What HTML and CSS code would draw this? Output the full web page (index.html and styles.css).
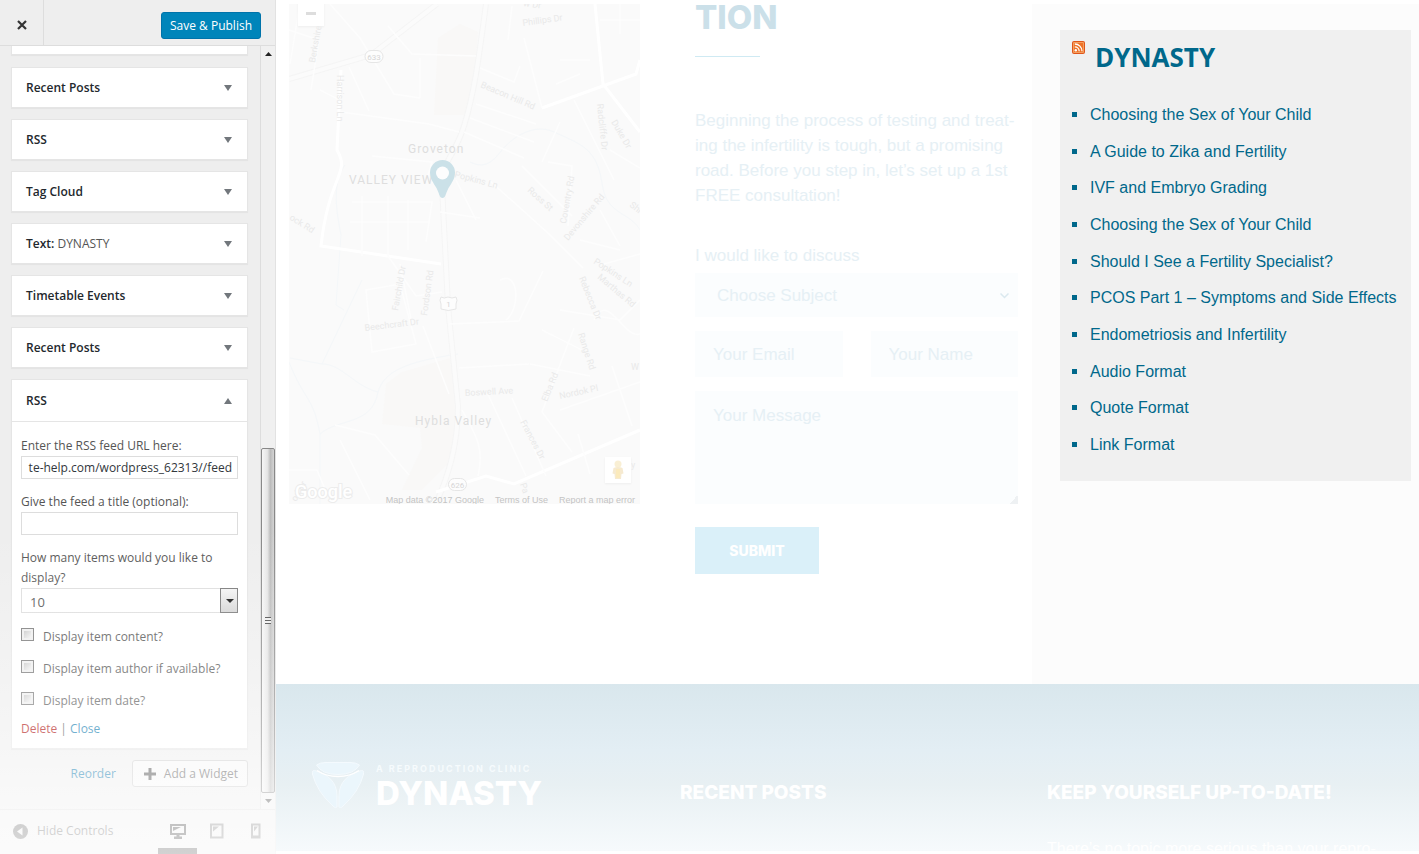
FILE: index.html
```html
<!DOCTYPE html>
<html lang="en">
<head>
<meta charset="utf-8">
<title>Customize: Dynasty</title>
<link rel="stylesheet" href="styles.css">
</head>
<body>
<div class="customizer">
  <aside class="sidebar">
    <header class="sidebar-head">
      <button class="close" type="button" aria-label="Close">
        <svg width="12" height="12" viewBox="0 0 12 12"><path d="M2 2l8 8M10 2l-8 8" stroke="#333" stroke-width="2.2" fill="none"/></svg>
      </button>
      <button class="publish" type="button">Save &amp; Publish</button>
    </header>
    <div class="sidebar-body">
      <div class="widgets">
        <div class="card-tail"></div>
        <div class="card"><button class="card-head" type="button"><span>Recent Posts</span><i class="caret"></i></button></div>
        <div class="card"><button class="card-head" type="button"><span>RSS</span><i class="caret"></i></button></div>
        <div class="card"><button class="card-head" type="button"><span>Tag Cloud</span><i class="caret"></i></button></div>
        <div class="card"><button class="card-head" type="button"><span>Text: <span class="sub">DYNASTY</span></span><i class="caret"></i></button></div>
        <div class="card"><button class="card-head" type="button"><span>Timetable Events</span><i class="caret"></i></button></div>
        <div class="card"><button class="card-head" type="button"><span>Recent Posts</span><i class="caret"></i></button></div>
        <div class="card">
          <button class="card-head open" type="button"><span>RSS</span><i class="caret up"></i></button>
          <form class="card-body">
            <div class="field">
              <label for="url">Enter the RSS feed URL here:</label>
              <input class="text url" id="url" type="text" value="te-help.com/wordpress_62313//feed">
            </div>
            <div class="field">
              <label for="title">Give the feed a title (optional):</label>
              <input class="text" id="title" type="text">
            </div>
            <div class="field">
              <label for="items">How many items would you like to display?</label>
              <div class="select"><select id="items"><option>10</option></select></div>
            </div>
            <div class="checks">
              <div class="check"><input type="checkbox" id="c1"><label for="c1">Display item content?</label></div>
              <div class="check"><input type="checkbox" id="c2"><label for="c2">Display item author if available?</label></div>
              <div class="check"><input type="checkbox" id="c3"><label for="c3">Display item date?</label></div>
            </div>
            <p class="links"><a class="delete" href="#">Delete</a> | <a href="#">Close</a></p>
          </form>
        </div>
        <div class="actions">
          <a href="#">Reorder</a>
          <button class="add" type="button">
            <svg width="12" height="12" viewBox="0 0 12 12"><path d="M6 0v12M0 6h12" stroke="#444" stroke-width="3"/></svg>
            <span>Add a Widget</span>
          </button>
        </div>
      </div>
      <div class="scrollbar">
        <svg width="7" height="4" viewBox="0 0 7 4"><path d="M0 4L3.500 0L7 4z" fill="#222"/></svg>
        <div class="thumb"><i></i></div>
        <svg width="7" height="4" viewBox="0 0 7 4"><path d="M0 0h7L3.500 4z" fill="#444"/></svg>
      </div>
    </div>
    <footer class="sidebar-foot">
      <button class="hide" type="button">
        <svg width="15" height="15" viewBox="0 0 15 15"><circle cx="7.500" cy="7.500" r="7.500" fill="#555"/><path d="M9.500 3.500v8L4 7.500z" fill="#eee"/></svg>
        <span>Hide Controls</span>
      </button>
      <div class="devices">
        <button class="device active" type="button" aria-label="Desktop">
          <svg width="16" height="16" viewBox="0 0 16 16"><path d="M1 2h14v9H1z" fill="#eee" stroke="#222" stroke-width="2"/><path d="M3 4h8L3 8z" fill="#222"/><path d="M6.500 11h3v2.500h-3zM4 13.500h8V16H4z" fill="#222"/></svg>
        </button>
        <button class="device" type="button" aria-label="Tablet">
          <svg width="14" height="16" viewBox="0 0 14 16"><path d="M1 1.500h11.500v13H1z" fill="none" stroke="#777" stroke-width="2"/><path d="M3 3.500h6l-6 5z" fill="#777"/></svg>
        </button>
        <button class="device" type="button" aria-label="Mobile">
          <svg width="10" height="16" viewBox="0 0 10 16"><path d="M1 1.500h7.500v13H1z" fill="none" stroke="#777" stroke-width="2"/><path d="M1 12.500h8V15H1zM3 3.500h4l-4 5z" fill="#777"/></svg>
        </button>
      </div>
    </footer>
  </aside>

  <main class="preview">
    <div class="columns">
      <section class="map">
        <svg class="map-art" viewBox="289 4 351 500" preserveAspectRatio="xMidYMid slice" role="img" aria-label="Map of Groveton">
          <rect x="200" y="0" width="500" height="520" fill="#fafafa"/>
          <path d="M438 38l22-14 18 8-4 56-3 27h-37z" fill="#f9f8f7"/>
          <path d="M386 384l16-12 48-14 8 60-4 40-32 32h-20l20-42-2-20-38-4z" fill="#f9f8f7"/>
          <g fill="none" stroke="#f4f7f9" stroke-width="1">
            <path d="M470 162c16 8 24-2 32-12s30-28 52-18 34 14 42 30 4 30 14 42 22 12 30 26"/>
            <path d="M345 165c-12 16-10 40-4 70l-5 70 8 5M362 280l-40 84-32-6M322 364c20 0 32 22 56 28 6-20 26-30 80-38M378 392c-6 34-40 26-58 42M289 362c16 40 24 34 31 72v70"/>
          </g>
          <g fill="none" stroke="#f5f5f5" stroke-width="6">
            <path d="M486 4c-8 60-12 90-22 122s-22 34-22 60l6 120 10 100c0 40-10 70-22 98"/>
            <path d="M289 79l82-24 66-51"/>
          </g>
          <g fill="none" stroke="#fbfbfb" stroke-width="4">
            <path d="M486 4c-8 60-12 90-22 122s-22 34-22 60l6 120 10 100c0 40-10 70-22 98"/>
            <path d="M289 79l82-24 66-51"/>
          </g>
          <g fill="none" stroke="#fff" stroke-width="3">
            <path d="M341 70l-4 80c14 24-8 24-16 96l120 18M595 4l8 80 37 48M542 108l94-34 4-14M436 492l50-16 28 8 126-54"/>
          </g>
          <g fill="none" stroke="#fdfdfd" stroke-width="1.500">
            <path d="M341 112l88 12 30 8M330 4l30 34 34 56 26 4M349 67l20 44M388 26l24 28 64 2M420 98v-40M524 38l18 70M508 40l4-34M480 68l34 14 6-16M476 104l60 20M470 118l64 24M464 132l60 26M489 180l60 54 34 34M522 166l50 50M548 162l24 4-4 60M560 122l-18 40M610 150l30 18M574 100l40 80M600 20h40M620 4v30"/>
            <path d="M423 326l26 68M449 324l70-3 24-50M560 310l60 10 20-20M574 328l-32 84 30 40M486 390l40 86M512 398l34 78M542 330l40 20M530 364l60 12M594 320c14-30 30 20 46 14M612 366l20 60M560 410l80-28M462 410c16 28 22 40 16 66M366 290l34-6 16 60-44 8zM388 256l28 40 26-4M400 264l12 60M459 368l70-4M590 474l-12-40M335 425l40 10 34 40M289 470h28l10 24M340 440l30 60M352 202h80l-6 40M350 222h80M362 196v60M388 196v60M408 200v50M372 156l60 6-6 20"/>
            <path d="M440 212l40 6M456 180l20 40M289 30l30 10-8 50M300 4l-10 60M320 90l20 10M560 60h30M556 84l24-10M600 210l20 36M580 240l40 10M604 264l36-10M500 280c20-10 20 30 6 40"/>
          </g>
          <g class="road-labels">
            <text transform="translate(315 63) rotate(-80)">Berkshire</text>
            <text transform="translate(337 75) rotate(90)">Harrison Ln</text>
            <text transform="translate(480 87) rotate(23)">Beacon Hill Rd</text>
            <text transform="translate(523 26) rotate(-8)">Phillips Dr</text>
            <text transform="translate(523 6) rotate(8)">w Dr</text>
            <text transform="translate(597 104) rotate(84)">Radcliffe Dr</text>
            <text transform="translate(611 122) rotate(60)">Duke Dr</text>
            <text transform="translate(454 177) rotate(15)">Popkins Ln</text>
            <text transform="translate(527 191) rotate(42)">Ross St</text>
            <text transform="translate(566 224) rotate(-80)">Coventry Rd</text>
            <text transform="translate(568 241) rotate(-50)">Devonshire Rd</text>
            <text transform="translate(629 206) rotate(38)">Shi</text>
            <text transform="translate(289 219) rotate(32)">ock Rd</text>
            <text transform="translate(398 311) rotate(-80)">Fairchild Dr</text>
            <text transform="translate(427 316) rotate(-82)">Fordson Rd</text>
            <text transform="translate(365 331) rotate(-7)">Beechcraft Dr</text>
            <text transform="translate(593 263) rotate(33)">Popkins Ln</text>
            <text transform="translate(597 278) rotate(40)">Marthas Rd</text>
            <text transform="translate(579 278) rotate(68)">Rebecca Dr</text>
            <text transform="translate(578 334) rotate(72)">Range Rd</text>
            <text transform="translate(465 396) rotate(-3)">Boswell Ave</text>
            <text transform="translate(547 402) rotate(-68)">Elba Rd</text>
            <text transform="translate(560 399) rotate(-12)">Nordok Pl</text>
            <text transform="translate(520 422) rotate(62)">Frances Dr</text>
            <text transform="translate(296 502) rotate(-60)">od Dr</text>
            <text transform="translate(520 484) rotate(72)">Pa</text>
            <text x="631" y="370">W</text>
            <text x="631" y="468">y</text>
          </g>
          <g class="place-labels">
            <text x="408" y="153">Groveton</text>
            <text x="349" y="184">VALLEY VIEW</text>
            <text x="415" y="425">Hybla Valley</text>
          </g>
          <g fill="#fdfdfd" stroke="#e6e6e6">
            <rect x="365" y="50.500" width="18" height="12" rx="6"/>
            <rect x="448.500" y="478.500" width="18" height="12" rx="6"/>
            <path d="M441 297q3 2 7 0q4 2 8 0q2 3 0 7v5q-8 3-15 0v-5q-2-4 0-7z"/>
          </g>
          <g class="shields">
            <text x="374" y="60">633</text>
            <text x="457.500" y="488">626</text>
            <text x="448.500" y="307">1</text>
          </g>
          <path d="M442.500 198c-3 0-3-4-6-10-3-5-6.500-9-6.500-15.500a12.500 12.500 0 0 1 25 0c0 6.500-3.500 10.500-6.500 15.500-3 6-3 10-6 10z" fill="#cbe1e8"/>
          <circle cx="442.500" cy="173" r="6.500" fill="#fdfdfd"/>
          <text class="google" x="295" y="498">Google</text>
        </svg>
        <button class="zoom-out" type="button" aria-label="Zoom out"></button>
        <button class="pegman" type="button" aria-label="Street View">
          <svg width="12" height="20" viewBox="0 0 12 20"><circle cx="6" cy="4" r="3.500" fill="#f9efd4"/><path d="M1.500 8q4.500-2 9 0l1 5.500-2 .5-.5 5H3l-.5-5-2-.5z" fill="#f6ead0"/><path d="M4 9h4v9H4z" fill="#fbeabc"/></svg>
        </button>
        <p class="map-credit"><span>Map data ©2017 Google</span><a href="#">Terms of Use</a><a href="#">Report a map error</a></p>
      </section>

      <section class="consult">
        <h2>TION</h2>
        <hr>
        <p class="intro">Beginning the process of testing and treat-<br>ing the infertility is tough, but a promising<br>road. Before you step in, let’s set up a 1st<br>FREE consultation!</p>
        <form class="contact">
          <label for="subject">I would like to discuss</label>
          <div class="subject">
            <select id="subject"><option>Choose Subject</option></select>
            <svg width="9" height="6" viewBox="0 0 9 6"><path d="M.500 .500l4 4 4-4" fill="none" stroke="#dbe9ef" stroke-width="1.500"/></svg>
          </div>
          <div class="pair">
            <input type="email" placeholder="Your Email" aria-label="Your Email">
            <input type="text" placeholder="Your Name" aria-label="Your Name">
          </div>
          <textarea placeholder="Your Message" aria-label="Your Message"></textarea>
          <button class="submit" type="button">SUBMIT</button>
        </form>
      </section>

      <aside class="feed-column">
        <section class="feed">
          <div class="feed-title">
            <svg width="13" height="13" viewBox="0 0 13 13"><rect width="13" height="13" rx="2" fill="#e0551a"/><rect x="1" y="1" width="11" height="11" rx="1" fill="#f4a05f"/><rect x="2" y="2" width="9" height="9" fill="#ee7328"/><circle cx="3.800" cy="9.300" r="1.200" fill="#fff"/><path d="M2.800 5.800a4.400 4.400 0 0 1 4.400 4.400M2.800 3a7.200 7.200 0 0 1 7.200 7.200" fill="none" stroke="#fff" stroke-width="1.300"/></svg>
            <h2>DYNASTY</h2>
          </div>
          <ul>
            <li><a href="#">Choosing the Sex of Your Child</a></li>
            <li><a href="#">A Guide to Zika and Fertility</a></li>
            <li><a href="#">IVF and Embryo Grading</a></li>
            <li><a href="#">Choosing the Sex of Your Child</a></li>
            <li><a href="#">Should I See a Fertility Specialist?</a></li>
            <li><a href="#">PCOS Part 1 – Symptoms and Side Effects</a></li>
            <li><a href="#">Endometriosis and Infertility</a></li>
            <li><a href="#">Audio Format</a></li>
            <li><a href="#">Quote Format</a></li>
            <li><a href="#">Link Format</a></li>
          </ul>
        </section>
      </aside>
    </div>

    <footer class="site-foot">
      <div class="brand">
        <svg width="52" height="47" viewBox="0 0 52 47">
          <g fill="#ebf6fc" stroke="#f4fafe" stroke-width="1">
            <path d="M4.500 3Q8 .5 14 .5H38Q44 .5 47.500 3Q42 12.500 26 12.500Q10 12.500 4.500 3z"/>
            <path d="M2.500 8.500C16 12 25 20 25 34V45Q23.500 47 21 44Q5 30 .5 12Q0 8 2.500 8.500z"/>
            <path d="M49.500 8.500C36 12 27 20 27 34V45Q28.500 47 31 44Q47 30 51.500 12Q52 8 49.500 8.500z"/>
          </g>
          <path d="M5 8.500Q14 14.500 26 14.500Q38 14.500 47 8.500" fill="none" stroke="#fff" stroke-width="1.500"/>
        </svg>
        <div><p class="tagline">A REPRODUCTION CLINIC</p><p class="name">DYNASTY</p></div>
      </div>
      <div><h3>RECENT POSTS</h3></div>
      <div><h3>KEEP YOURSELF UP-TO-DATE!</h3><p class="news">There’s no topic more serious than your repro-</p></div>
    </footer>
  </main>
</div>
</body>
</html>
```

FILE: styles.css
```css
* { box-sizing: border-box; }
body, h2, h3, p, ul { margin: 0; padding: 0; }
button, input, select, textarea { font: inherit; color: inherit; margin: 0; border-radius: 0; }
button { cursor: pointer; }
a { color: #0073aa; text-decoration: none; }

.customizer {
  display: grid;
  grid-template-columns: 276px minmax(0, 1fr);
  height: 100vh;
  overflow: hidden;
  background: #fff;
}

/* Controls panel */
.sidebar {
  position: relative;
  display: flex;
  flex-direction: column;
  min-height: 0;
  background: #eee;
  border-right: 1px solid #e2e2e2;
  font: 12px/20px "Open Sans", "Noto Sans", sans-serif;
  color: #555;
}
.sidebar::after {
  content: "";
  position: absolute;
  inset: 0 -1px 0 0;
  pointer-events: none;
  background: linear-gradient(rgba(255,255,255,0) 62%, rgba(255,255,255,.28) 78%, rgba(255,255,255,.45) 86%, rgba(255,255,255,.72) 96%, rgba(255,255,255,.78));
}
.sidebar-head {
  display: flex;
  align-items: center;
  justify-content: space-between;
  flex: none;
  height: 46px;
  padding-right: 14px;
  border-bottom: 1px solid #ddd;
}
.close {
  display: grid;
  place-items: center;
  width: 44px;
  height: 45px;
  padding-top: 5px;
  background: none;
  border: 0;
  border-right: 1px solid #ddd;
}
.publish {
  height: 27px;
  margin-top: 6px;
  padding: 0 8px;
  background: #0085ba;
  border: 1px solid #0073aa;
  border-radius: 3px;
  color: #fff;
  line-height: 24px;
}
.sidebar-body { display: flex; flex: 1; min-height: 0; overflow: hidden; }
.widgets {
  display: flex;
  flex-direction: column;
  flex: 1;
  gap: 11px;
  padding: 0 12px 0 11px;
}
.card, .card-tail { background: #fff; border: 1px solid #e5e5e5; box-shadow: 0 1px 1px rgba(0,0,0,.04); }
.card-tail { height: 9px; border-top: 0; margin-bottom: 1px; flex: none; }
.card-head {
  display: flex;
  align-items: center;
  justify-content: space-between;
  width: 100%;
  height: 39px;
  padding: 0 15px 0 14px;
  background: none;
  border: 0;
  color: #23282d;
  font-weight: 600;
}
.sub { font-weight: 400; color: #555; }
.card-head.open { height: 42px; border-bottom: 1px solid #e5e5e5; }
.caret { border: 4px solid transparent; border-top: 6px solid #72777c; border-bottom: 0; }
.caret.up { border-top: 0; border-bottom: 6px solid #72777c; }
.card-body { padding: 14px 9px 9px; }
.field { margin-bottom: 13px; }
.field label { display: block; }
.text {
  display: block;
  width: 100%;
  height: 23px;
  padding: 0 5px;
  background: #fff;
  border: 1px solid #ddd;
  color: #32373c;
}
.url { text-align: right; }
.select { position: relative; }
.select select {
  appearance: none;
  display: block;
  width: 100%;
  height: 25px;
  padding: 2px 8px 0;
  background: #fff;
  border: 1px solid #ddd;
  font-size: 13px;
}
.select::before {
  content: "";
  position: absolute;
  inset: 0 0 0 auto;
  width: 16px;
  background: linear-gradient(#f4f4f4, #d4d4d4);
  border: 1px solid #777;
  pointer-events: none;
}
.select::after {
  content: "";
  position: absolute;
  right: 4px;
  top: 11px;
  border: 4px solid transparent;
  border-top-color: #111;
  border-bottom: 0;
  pointer-events: none;
}
.checks { display: grid; gap: 12px; padding-top: 1px; }
.check { display: flex; gap: 9px; }
.check input {
  appearance: none;
  width: 13px;
  height: 13px;
  margin-top: 1px;
  border: 1px solid #777;
  background: linear-gradient(135deg, #bbb, #fff);
  box-shadow: inset 0 0 0 2px #eee;
}
.links { margin-top: 8px; }
.links .delete { color: #a00; }
.actions { display: flex; align-items: center; justify-content: flex-end; gap: 16px; }
.add {
  display: flex;
  align-items: center;
  gap: 8px;
  height: 27px;
  padding: 0 9px 0 11px;
  background: #f7f7f7;
  border: 1px solid #ccc;
  border-radius: 3px;
}
.scrollbar {
  display: flex;
  flex-direction: column;
  align-items: center;
  width: 15px;
  flex: none;
  padding: 6px 0;
  background: #f0f0f0;
  border-left: 1px solid #ddd;
}
.thumb {
  display: grid;
  place-items: center;
  width: 100%;
  height: 345px;
  margin: auto 0 6px;
  background: linear-gradient(90deg, #f6f6f6, #e4e4e4 45%, #bbb 70%, #d4d4d4);
  border: 1px solid #888;
  border-radius: 2px;
}
.thumb i { width: 6px; height: 7px; background: repeating-linear-gradient(#444 0 1px, #eee 1px 3px); }
.sidebar-foot {
  display: flex;
  justify-content: space-between;
  flex: none;
  height: 45px;
  border-top: 1px solid #ddd;
}
.hide { display: flex; align-items: center; gap: 9px; padding: 0 0 2px 13px; background: none; border: 0; }
.devices { display: flex; }
.device {
  display: grid;
  place-items: center;
  width: 39px;
  padding: 3px 0 0;
  background: none;
  border: 0;
  border-bottom: 6px solid transparent;
}
.device.active { border-bottom-color: #333; }

/* Site preview */
.preview {
  display: flex;
  flex-direction: column;
  min-width: 0;
  min-height: 0;
  padding-bottom: 3px;
  font: 17px/25px "Liberation Sans", Arial, sans-serif;
}
.columns { display: grid; grid-template-columns: minmax(0, 364fr) minmax(0, 392fr) minmax(0, 387fr); flex: 1; min-height: 0; }
.map { position: relative; height: 500px; margin: 4px 0 0 13px; overflow: hidden; }
.map-art { display: block; width: 100%; height: 100%; font-family: Roboto, sans-serif; }
.road-labels { fill: #e9e9e9; font-size: 9px; }
.place-labels { fill: #dedede; font-size: 12px; letter-spacing: 1px; }
.shields { fill: #d6d6d6; font-size: 8px; text-anchor: middle; }
.google { fill: #fff; stroke: #ececec; stroke-width: 2px; paint-order: stroke; font-size: 18px; font-weight: 500; }
.zoom-out, .pegman {
  position: absolute;
  display: grid;
  place-items: center;
  width: 26px;
  height: 26px;
  padding: 0;
  background: #fff;
  border: 0;
  box-shadow: 0 1px 2px #eee;
}
.zoom-out { left: 9px; top: -4px; }
.zoom-out::before { content: ""; width: 10px; height: 3px; background: #ddd; }
.pegman { right: 9px; bottom: 21px; }
.map-credit {
  position: absolute;
  right: 5px;
  bottom: -2px;
  display: flex;
  gap: 11px;
  font: 9px/12px "Liberation Sans", Arial, sans-serif;
  color: #c4c4c4;
  white-space: nowrap;
}
.map-credit a { color: inherit; }

.consult { padding: 0 14px 0 55px; color: #e6f0f5; }
.consult h2 { font: 800 33px/34px Inter, sans-serif; color: #cbe0e9; }
.consult hr { width: 65px; height: 1px; margin: 22px 0 51px; border: 0; background: #cfeaf3; }
.intro { white-space: nowrap; }
.contact { display: flex; flex-direction: column; margin-top: 35px; }
.contact input, .contact textarea, .contact select { width: 100%; min-width: 0; background: #fbfdfe; border: 0; padding: 0 18px; }
.contact ::placeholder { color: #e6f0f5; opacity: 1; }
.subject { position: relative; margin-top: 5px; }
.contact select { appearance: none; display: block; height: 44px; padding: 0 22px; }
.subject svg { position: absolute; right: 9px; top: 20px; pointer-events: none; }
.pair { display: grid; grid-template-columns: 1fr 1fr; gap: 28px; margin: 14px 0; }
.contact input { height: 46px; padding-top: 2px; }
.contact textarea { display: block; height: 113px; padding: 12px 18px; resize: vertical; }
.contact textarea::-webkit-resizer { background: linear-gradient(135deg, transparent 70%, #eef1f3 70%); }
.submit {
  align-self: flex-start;
  width: 124px;
  height: 47px;
  margin-top: 23px;
  padding: 0;
  background: #daf0f9;
  border: 0;
  color: #fff;
  font: 800 14px/20px Inter, sans-serif;
}

.feed-column { margin-top: 4px; padding: 26px 8px 0 28px; background: #fcfcfc; }
.feed { padding: 11px 0 18px 12px; background: #f0f0f0; }
.feed-title { display: flex; gap: 10px; }
.feed h2 { font: 700 26px/32px "Open Sans", sans-serif; color: #00688b; }
.feed ul { display: grid; grid-auto-rows: 1fr; align-items: center; height: 367px; margin-top: 23px; list-style: none; font-size: 16px; }
.feed li { display: flex; align-items: center; gap: 13px; white-space: nowrap; }
.feed li::before { content: ""; width: 5px; height: 5px; background: #00688b; }
.feed a { color: #00688b; }

.site-foot {
  display: grid;
  grid-template-columns: 368fr 367fr 372fr;
  flex: none;
  height: 167px;
  padding: 78px 0 0 36px;
  overflow: hidden;
  background: linear-gradient(#d9e7ed, #e3eef4 40%, #e8f0f3 60%, #f6fafc);
  color: #fff;
}
.brand { display: flex; gap: 12px; }
.tagline { font: 700 9px/14px Inter, sans-serif; letter-spacing: 2px; color: #f6fbfd; white-space: nowrap; }
.name { font: 800 33px/34px Inter, sans-serif; }
.site-foot h3 { margin-top: 18px; font: 800 19px/26px Inter, sans-serif; white-space: nowrap; }
.news { margin-top: 30px; font-size: 16px; white-space: nowrap; }
```
